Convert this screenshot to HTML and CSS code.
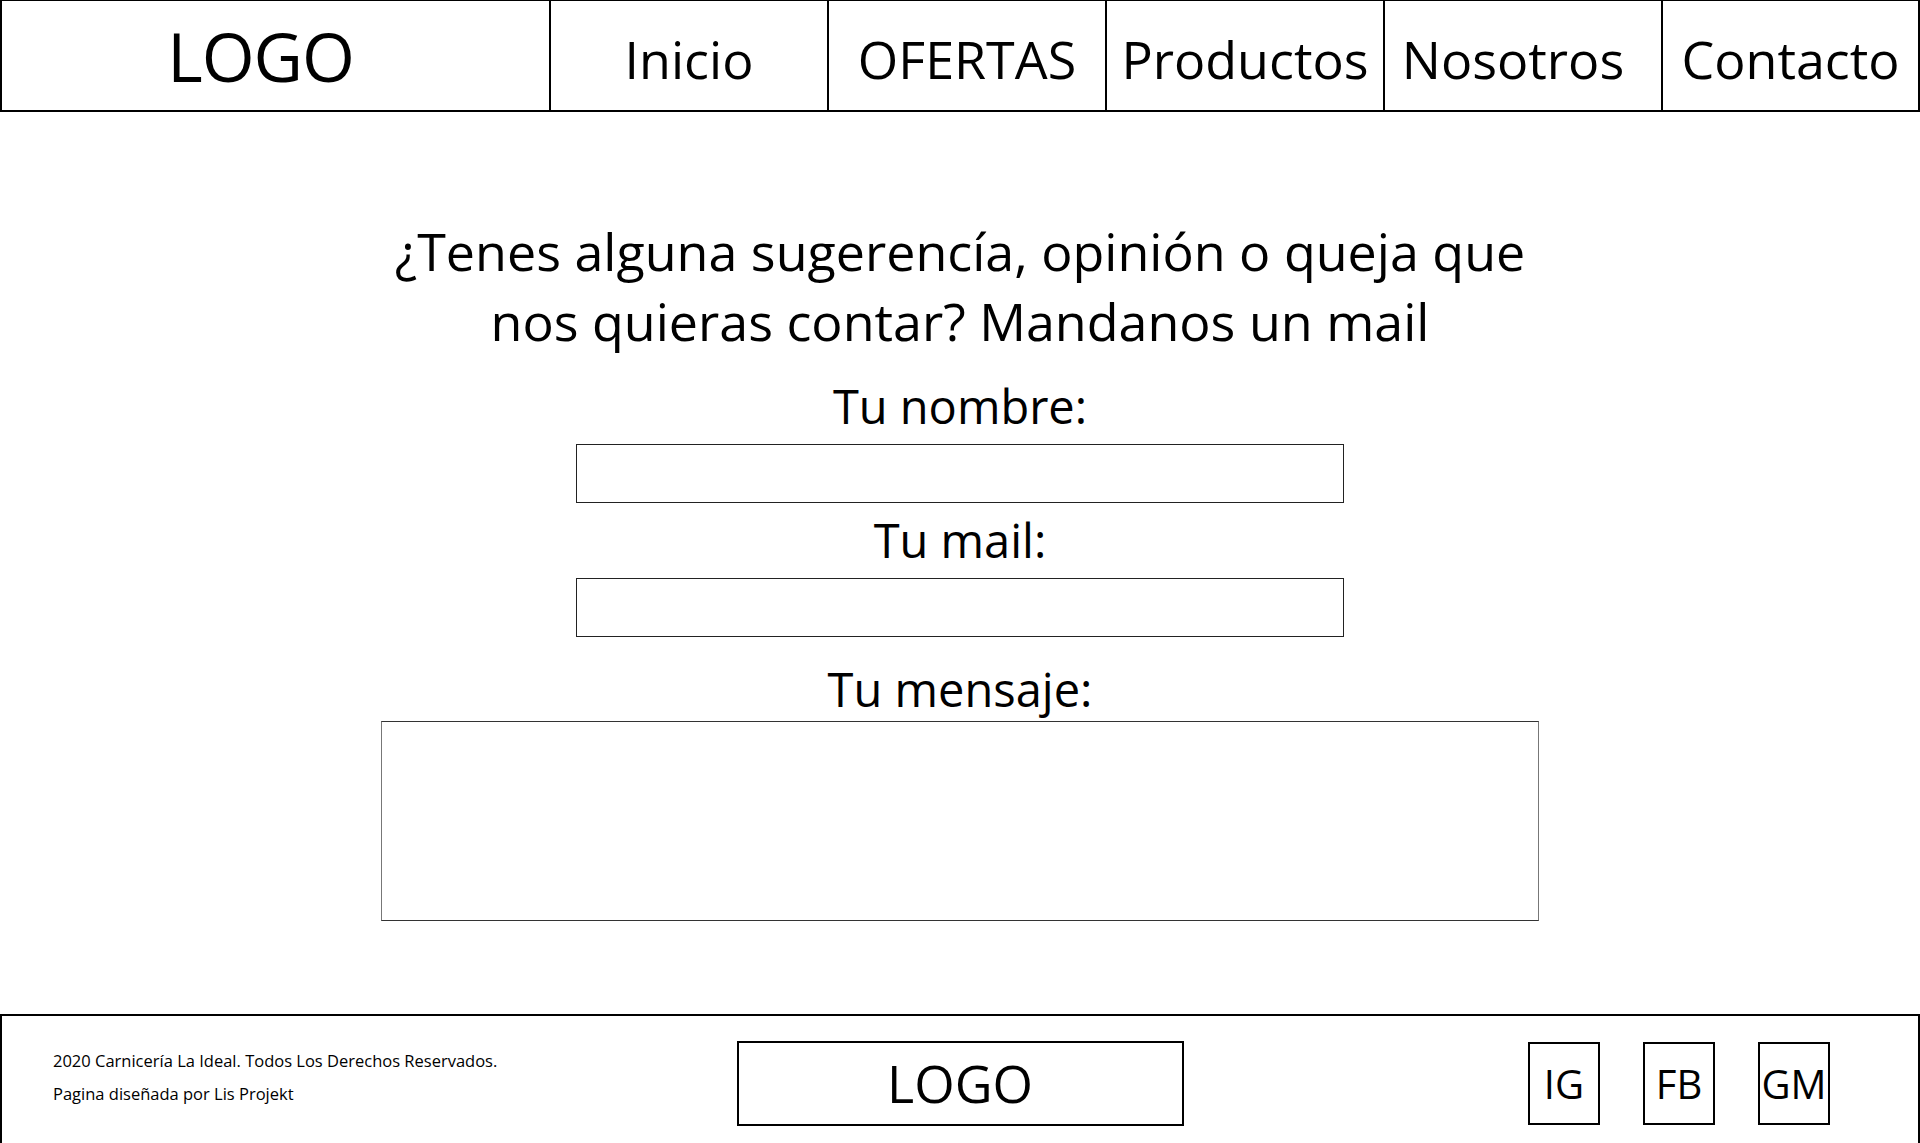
FILE: index.html
```html
<!DOCTYPE html>
<html lang="es">

<head>
    <meta charset="UTF-8">
    <meta name="viewport" content="width=device-width, initial-scale=1.0">
    <title>Contacto - Carnicería La Ideal</title>
    <link rel="stylesheet" href="styles.css">
</head>

<body>
    <header class="topbar">
        <div class="brand">LOGO</div>
        <nav class="menu">
            <a href="#" class="menu-item">Inicio</a>
            <a href="#" class="menu-item">OFERTAS</a>
            <a href="#" class="menu-item">Productos</a>
            <a href="#" class="menu-item menu-item-shift">Nosotros</a>
            <a href="#" class="menu-item">Contacto</a>
        </nav>
    </header>

    <main class="contact">
        <h1 class="contact-title">¿Tenes alguna sugerencía, opinión o queja que<br>nos quieras contar? Mandanos un mail</h1>
        <form class="contact-form">
            <label for="nombre" class="field-label">Tu nombre:</label>
            <input type="text" id="nombre" name="nombre" class="field-input">
            <label for="mail" class="field-label label-mail">Tu mail:</label>
            <input type="email" id="mail" name="mail" class="field-input">
            <label for="mensaje" class="field-label label-message">Tu mensaje:</label>
            <textarea id="mensaje" name="mensaje" class="field-message"></textarea>
        </form>
    </main>

    <footer class="bottombar">
        <div class="credits">
            <p>2020 Carnicería La Ideal. Todos Los Derechos Reservados.</p>
            <p>Pagina diseñada por Lis Projekt</p>
        </div>
        <div class="footer-logo">LOGO</div>
        <div class="social">
            <a href="#" class="social-item">IG</a>
            <a href="#" class="social-item">FB</a>
            <a href="#" class="social-item">GM</a>
        </div>
    </footer>
</body>

</html>
```

FILE: styles.css
```css
* {
    box-sizing: border-box;
}

body {
    margin: 0;
    font-family: "Open Sans", "Noto Sans", sans-serif;
    color: #000;
    background: #fff;
}

a {
    color: inherit;
    text-decoration: none;
}

/* barra superior */
.topbar {
    display: grid;
    grid-template-columns: 547px 1fr;
    height: 112px;
    border: 2px solid #000;
    border-top-width: 1px;
}

.brand {
    padding-top: 15px;
    padding-right: 30px;
    font-size: 68px;
    line-height: 80px;
    letter-spacing: -1px;
    text-align: center;
}

.menu {
    display: grid;
    grid-template-columns: repeat(4, 278px) 1fr;
}

.menu-item {
    border-left: 2px solid #000;
    padding-top: 23px;
    font-size: 52px;
    line-height: 70px;
    text-align: center;
    white-space: nowrap;
}

.menu-item-shift {
    padding-right: 20px;
}

/* formulario */
.contact {
    display: flex;
    flex-direction: column;
    align-items: center;
}

.contact-title {
    margin: 104px 0 0;
    font-size: 52px;
    font-weight: normal;
    line-height: 70px;
    text-align: center;
}

.contact-form {
    display: flex;
    flex-direction: column;
    align-items: center;
    margin-bottom: 93px;
}

.field-label {
    margin-top: 22px;
    font-size: 47px;
    line-height: 56px;
}

.label-mail {
    margin-top: 9px;
}

.label-message {
    margin-top: 24px;
}

.field-input {
    width: 768px;
    height: 59px;
    margin-top: 10px;
    border: 1px solid #222;
    border-radius: 0;
    background: #fff;
    font-family: inherit;
    font-size: 24px;
}

.field-message {
    display: block;
    width: 1158px;
    height: 200px;
    margin-top: 4px;
    border: 1px solid #333;
    border-left-color: #777;
    border-right-color: #777;
    border-radius: 0;
    resize: none;
    font-family: inherit;
    font-size: 24px;
}

/* pie de pagina */
.bottombar {
    display: grid;
    grid-template-columns: 1fr 447px 1fr;
    height: 129px;
    padding-top: 25px;
    border-top: 2px solid #000;
    border-left: 2px solid #000;
    border-right: 2px solid #000;
}

.credits {
    padding-left: 51px;
    padding-top: 3px;
    font-size: 16.5px;
    line-height: 33px;
}

.credits p {
    margin: 0;
}

.footer-logo {
    height: 85px;
    border: 2px solid #000;
    font-size: 52px;
    line-height: 79px;
    text-align: center;
}

.social {
    display: flex;
    justify-content: flex-end;
    align-items: flex-start;
    gap: 43px;
    padding-top: 1px;
    padding-right: 88px;
}

.social-item {
    width: 72px;
    height: 83px;
    border: 2px solid #000;
    font-size: 40px;
    line-height: 79px;
    text-align: center;
}
```
